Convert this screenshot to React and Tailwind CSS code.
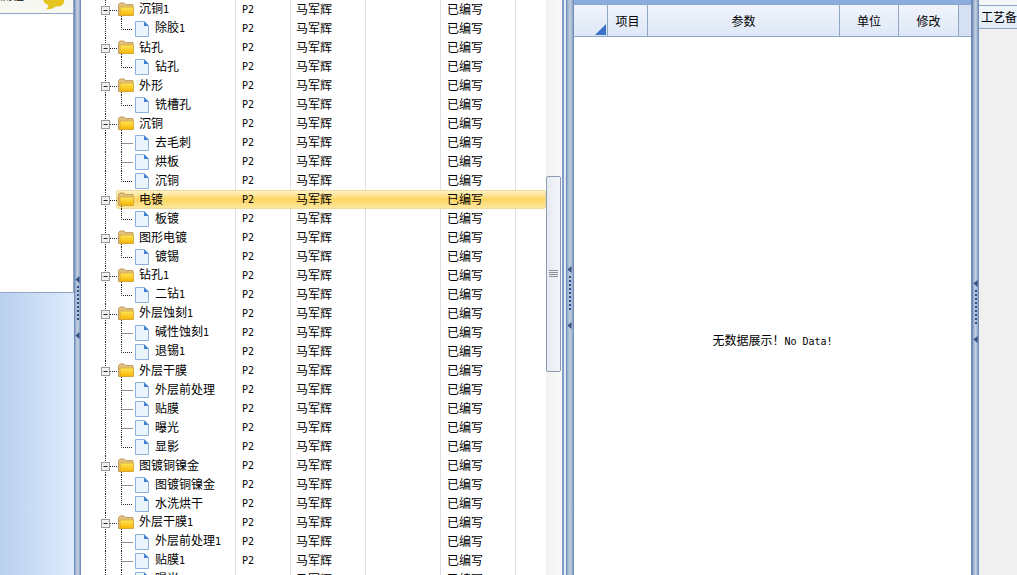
const ROWS = [
  ["沉铜1", 1], ["除胶1", 0, 1], ["钻孔", 1], ["钻孔", 0, 1], ["外形", 1], ["铣槽孔", 0, 1],
  ["沉铜", 1], ["去毛刺", 0], ["烘板", 0], ["沉铜", 0, 1], ["电镀", 1], ["板镀", 0, 1],
  ["图形电镀", 1], ["镀锡", 0, 1], ["钻孔1", 1], ["二钻1", 0, 1], ["外层蚀刻1", 1], ["碱性蚀刻1", 0], ["退锡1", 0, 1],
  ["外层干膜", 1], ["外层前处理", 0], ["贴膜", 0], ["曝光", 0], ["显影", 0, 1],
  ["图镀铜镍金", 1], ["图镀铜镍金", 0], ["水洗烘干", 0, 1], ["外层干膜1", 1], ["外层前处理1", 0], ["贴膜1", 0], ["曝光1", 0],
];

function T({ text }) {
  return text.split(/([A-Za-z0-9!: .]+)/).map((part, i) =>
    /^[A-Za-z0-9!: .]+$/.test(part) ? (
      <span key={i} className="font-['DejaVu_Sans_Mono',monospace] text-[10px]">{part}</span>
    ) : (
      <span key={i}>{part}</span>
    )
  );
}

function Folder() {
  return (
    <g>
      <path d="M18.5 15.5V4.5L20 3h4l1.5 1.5h7.5v11z" fill="#e2c07f" stroke="#c49f5e" />
      <path d="M20 7h13.5v8.5H20z" fill="url(#fy)" stroke="#d4a63a" strokeWidth="0.8" />
    </g>
  );
}

function FileIcon() {
  return (
    <g>
      <path d="M35.5 2.5h9l4 4v11h-13z" fill="#ebf3fd" stroke="#8db0dc" />
      <path d="M44 2.5v4.5h4.5z" fill="#3f7fd0" />
    </g>
  );
}

function Gutter({ folder, last }) {
  const dot = { stroke: "#222", strokeWidth: 1, strokeDasharray: "1 1", fill: "none" };
  return (
    <svg width={folder ? 39 : 55} height={19} viewBox={`0 0 ${folder ? 39 : 55} 19`} className="shrink-0">
      <defs>
        <linearGradient id="fy" x1="0" y1="0" x2="0" y2="1">
          <stop offset="0" stopColor="#ffe65a" />
          <stop offset="1" stopColor="#f7b500" />
        </linearGradient>
      </defs>
      <path d="M5.5 0V19" {...dot} />
      {folder ? (
        <>
          <path d="M10 10.5H18" {...dot} />
          <path d="M21.5 16V19" {...dot} />
          <rect x="1.5" y="6.5" width="8" height="8" fill="#f2f2f2" stroke="#9a9a9a" />
          <path d="M3.5 10.5h4" stroke="#222" />
          <Folder />
        </>
      ) : (
        <>
          <path d={last ? "M21.5 0V10.5H33" : "M21.5 0V19M21.5 10.5H33"} {...dot} />
          <FileIcon />
        </>
      )}
    </svg>
  );
}

function Cell({ w, text, pad = "pl-[6px]" }) {
  return (
    <div className={`${w} ${pad} h-[19px] shrink-0 border-r border-[#dfdfdf] flex items-center`}>
      {text ? (
        <span className="relative z-10 whitespace-nowrap mb-[2px]"><T text={text} /></span>
      ) : null}
    </div>
  );
}

function Row({ name, folder, last, active }) {
  return (
    <div className="relative flex h-[19px] text-[12px] leading-[19px] text-black">
      <div className="w-[155px] shrink-0 border-r border-[#dfdfdf] flex items-center pl-[19px] h-[19px]">
        <span className="relative z-10 flex items-center whitespace-nowrap">
          <Gutter folder={folder} last={last} />
          <span className="mb-[2px]"><T text={name} /></span>
        </span>
      </div>
      <Cell w="w-[55px]" text="P2" />
      <Cell w="w-[75px]" text="马军辉" pad="pl-[5px]" />
      <Cell w="w-[75px]" />
      <Cell w="w-[75px]" text="已编写" />
      {active ? (
        <div className="absolute left-[35px] right-0 top-0 h-[19px] rounded-[2px] border border-[#efdc9f] bg-gradient-to-b from-[#fff3c4] via-[#fdd561] to-[#fee89d]" />
      ) : null}
    </div>
  );
}

function Grip({ mt }) {
  const dots = [];
  for (let i = 0; i < 9; i++) dots.push(<rect key={i} x="2" y={10 + i * 4} width="2" height="2" fill="#2f4f8a" />);
  return (
    <svg width="7" height="68" viewBox="0 0 7 68" className={`${mt} shrink-0`}>
      <path d="M4.5 0V7L0.5 3.5z" fill="#34507f" />
      {dots}
      <path d="M4.5 56V63L0.5 59.5z" fill="#34507f" />
    </svg>
  );
}

function Splitter({ mt, w = "w-[7px]" }) {
  return (
    <div className={`${w} h-full shrink-0 flex flex-col border-x border-[#6f8db8] bg-gradient-to-r from-[#8ea6c8] via-[#c3cfe0] to-[#8ea6c8]`}>
      <Grip mt={mt} />
    </div>
  );
}

function Head({ w, text }) {
  return (
    <div className={`${w} h-full shrink-0 flex items-center justify-center border-r border-[#8fa5c5]`}>
      {text}
    </div>
  );
}

export default function App() {
  return (
    <div className="flex w-[1017px] h-[575px] overflow-hidden bg-white font-['Noto_Sans_CJK_SC',sans-serif] text-[12px] text-black">
      {/* left panel */}
      <div className="w-[74px] h-full shrink-0 flex flex-col">
        <div className="h-[14px] shrink-0 bg-[#f7f8f2] border-b border-r border-[#8fa5c5] flex justify-between overflow-hidden">
          <span className="-mt-[15px] leading-[19px]">流程</span>
          <svg width="24" height="13" viewBox="0 0 24 13" className="mr-[7px] shrink-0">
            <path d="M1 -4H22V2Q21 7 14 6.5Q9 10 4 9Q7 7 6 5Q1 3 1 -2z" fill="#e6c420" />
          </svg>
        </div>
        <div className="h-[279px] shrink-0 bg-white border-b border-r border-[#8fa5c5]" />
        <div className="flex-1 bg-gradient-to-r from-[#b9d0ef] to-[#deebfc]" />
      </div>
      <Splitter mt="mt-[276px]" />
      {/* tree */}
      <div className="w-[465px] h-full shrink-0 overflow-hidden bg-white">
        {ROWS.map((r, i) => (
          <Row key={i} name={r[0]} folder={!!r[1]} last={!!r[2]} active={i === 10} />
        ))}
      </div>
      {/* scrollbar */}
      <div className="w-[16px] h-full shrink-0 bg-gradient-to-r from-[#f2f2f2] to-[#fafafa] pt-[176px]">
        <div className="w-[15px] h-[196px] rounded-[2px] border border-[#8b9bb0] bg-gradient-to-r from-[#e6eaf2] to-[#f3f5f9] flex items-center justify-center">
          <svg width="9" height="8" viewBox="0 0 9 8">
            <path d="M0 .5H9M0 2.5H9M0 4.5H9M0 6.5H9" stroke="#8a8f98" />
          </svg>
        </div>
      </div>
      <div className="w-[4px] h-full shrink-0 border-l-2 border-[#7f9cc6] bg-[#e3ebf7]" />
      <Splitter mt="mt-[266px]" w="w-[8px]" />
      {/* right grid */}
      <div className="w-[398px] h-full shrink-0 flex flex-col border-r border-[#6f8db8]">
        <div className="h-[5px] shrink-0 bg-[#8cade0] border-b border-[#8fa5c5]" />
        <div className="h-[32px] shrink-0 flex border-b border-[#8fa5c5] bg-gradient-to-b from-[#f1f5fc] to-[#dde7f6]">
          <div className="w-[34px] h-full shrink-0 border-r border-[#8fa5c5] flex items-end justify-end pr-[1px] pb-[1px]">
            <svg width="11" height="11" viewBox="0 0 11 11">
              <path d="M11 0V11H0z" fill="#3a73c8" />
            </svg>
          </div>
          <Head w="w-[40px]" text="项目" />
          <Head w="w-[192px]" text="参数" />
          <Head w="w-[59px]" text="单位" />
          <Head w="w-[60px]" text="修改" />
          <div className="flex-1 bg-[#d5e1f2]" />
        </div>
        <div className="flex-1 flex items-center justify-center pt-[68px] bg-white">
          <span className="whitespace-nowrap"><T text="无数据展示！" /><T text="No Data!" /></span>
        </div>
      </div>
      <Splitter mt="mt-[280px]" />
      {/* far panel */}
      <div className="flex-1 h-full flex flex-col bg-[#f0f0f0]">
        <div className="h-[5px] shrink-0 bg-[#f4f6fa]" />
        <div className="h-[24px] shrink-0 border-y border-[#8fa5c5] bg-gradient-to-b from-[#f3f7fd] to-[#dfe9f7] pl-[2px] flex items-center overflow-hidden whitespace-nowrap">工艺备注</div>
      </div>
    </div>
  );
}
